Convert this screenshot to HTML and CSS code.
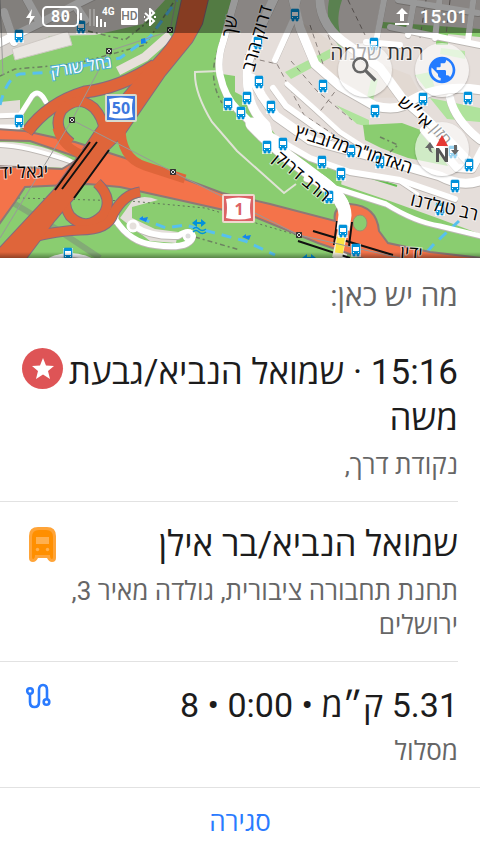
FILE: index.html
```html
<!DOCTYPE html>
<html lang="he" dir="rtl">
<head>
    <meta charset="UTF-8">
    <meta name="viewport" content="width=device-width, initial-scale=1.0">
    <title>מה יש כאן</title>
    <link rel="stylesheet" href="styles.css">
</head>
<body>
    <div class="map">
        <svg class="map-canvas" viewBox="0 0 480 258" direction="ltr">
            <defs>
                <g id="bus">
                    <path d="M-5-6h10v13h-10z" fill="#fff" opacity=".7"/>
                    <path d="M-3-6h6q1 0 1 1v9h-1v2h-2v-2h-2v2h-2v-2h-1v-9q0-1 1-1z" fill="#0092da" stroke="#0092da" stroke-width=".6"/>
                    <path d="M-3-3h6v4h-6zM-3 2h1v1h-1zM2 2h1v1h-1z" fill="#fff"/>
                </g>
                <g id="tower">
                    <path d="M-2.500-2.500h5v5h-5zM-2.500-2.500l5 5M-2.500 2.500l5-5" fill="#ddd" stroke="#333" stroke-width="1"/>
                </g>
                <g id="streets" fill="none" stroke-linecap="round" stroke-linejoin="round">
                    <path d="M-5 45L40 23L75 5L95-5M14 42L4 12M40 23L25-4M75 5L85 20" stroke-width="8"/>
                    <path d="M237-8L223 42Q217 60 220 75Q225 98 238 110L256 128" stroke-width="7"/>
                    <path d="M277-8L262 24L248 62Q246 82 249 95Q252 112 266 125L270 142" stroke-width="9"/>
                    <path d="M275 60L293 20L299-5" stroke-width="6"/>
                    <path d="M292-5L300 28L315 64L340 86L375 106Q400 112 412 100Q440 84 482 90" stroke-width="9"/>
                    <path d="M320-5Q318 25 348 45L380 68L402 98L425 118L450 142L472 165" stroke-width="9"/>
                    <path d="M252 78L262 96L276 116L310 140L370 156L440 176Q462 188 482 180" stroke-width="9"/>
                    <path d="M287 84L315 109L340 132L365 148" stroke-width="5"/>
                    <path d="M273 88L286 106L310 123L330 137" stroke-width="6"/>
                    <path d="M272 136L310 158L350 172L400 180L455 199" stroke-width="6"/>
                    <path d="M355 172L400 182L418 194" stroke-width="3"/>
                    <path d="M385-5L376 42M398 0L478 13M390 27L480 45M415-5L408 35M440-5L435 38M474-5L468 40M366 42L400 45" stroke-width="6"/>
                    <path d="M450 98Q455 120 480 140M424 130L457 168L472 169L482 150" stroke-width="8"/>
                    <path d="M252 124L262 134L287 156L318 179Q345 198 345 215L340 258" stroke-width="13"/>
                    <path d="M306 179L345 191L386 204Q415 222 440 226L485 237" stroke-width="5"/>
                    <path d="M-3 127L18 127M-3 116L20 115L32 96Q39 88 46 102" stroke-width="5"/>
                    <path d="M-5 145Q20 144 70 161" stroke-width="4"/>
                    <path d="M105 221L115 219Q130 243 155 245Q190 250 193 236Q190 228 178 236Q150 237 134 226M116 212L115 221" stroke-width="6"/>
                    <path d="M45 262Q70 248 95 262" stroke-width="4"/>
                </g>
                <g id="ramps" fill="none">
                    <path d="M155 65Q120 88 85 92Q48 103 27 132" stroke-width="11"/>
                    <path d="M71 143Q51 128 62 110Q78 94 94 108Q103 118 104 130" stroke-width="9"/>
                    <path d="M57 128Q62 148 86 156M121 125Q120 158 145 166L185 179" stroke-width="9"/>
                    <path d="M97 183Q114 199 103 215Q86 232 70 216Q62 204 68 190" stroke-width="9"/>
                    <path d="M25 240Q45 232 80 230Q108 230 113 214Q124 194 140 192" stroke-width="9"/>
                </g>
                <path id="trunk" d="M183-5L209-5L202 24L192 42L165 75L125 133L107 151L74 198L55 220L25 260L-4 262L-4 252L53 191L82 151L96 130L118 101L143 71Q168 47 175 32z"/>
                <path id="motorway" d="M-5 129L25 131L75 142L150 166L222 193L270 204L335 221Q332 206 350 204Q377 206 379 231L388 243L430 252L482 258V262L370 261L318 243L255 217L170 198L120 187L88 184L25 187L15 202L-5 230L-5 166L62 169L80 158L30 141L-5 140z"/>
            </defs>
            <rect width="480" height="258" fill="#8acd70"/>

            <!-- built-up areas -->
            <path d="M0 0H165L143 24L95 35L50 36L0 60z" fill="#d9d4cf"/>
            <path d="M12 49L68 31L72 45L15 60z" fill="#eae6e2" stroke="#cfc9c4"/>
            <path d="M0 102L20 100L20 130L0 130z" fill="#e2ddd8"/>
            <path d="M235 0H480V234L440 219L390 201L340 184L343 172L306 154L277 137L250 100L235 92V76L222 74V50z" fill="#e5deda"/>
            <path d="M290 15L345 50L410 75L422 97L370 98L320 67z" fill="#e2d9d2"/>
            <path d="M0 142Q40 141 75 161L73 168L0 166z" fill="#e6e1dd"/>
            <path d="M120 218L133 200Q144 194 158 200L132 207V218L155 229L178 232L176 243L150 241z" fill="#e3deda"/>

            <!-- parks -->
            <path d="M285 72L330 49L330 58L291 79z" fill="#afe39c"/>
            <path d="M329 0L342 0Q333 25 346 47L340 48Q324 27 329 0z" fill="#97d885"/>
            <path d="M383 22L480 29V37L381 28zM436 31h12v14h-12z" fill="#8acd70"/>
            <path d="M336 105L369 120V127L357 124zM415 75l15-3 5 16-9 1zM430 98L480 108V122L447 119z" fill="#afe39c"/>
            <path d="M363 125L402 123L426 132L448 166L408 158L381 148L365 140z" fill="#8acd70"/>
            <path d="M441 48l24 3v8l-25-5zM371 80l7-1-5 22h-7z" fill="#bbe7aa"/>
            <path d="M315 167L342 175L341 187L313 177z" fill="#8acd70"/>
            <path d="M253 84L268 112M349 171L397 186" stroke="#65be50" stroke-width="2" fill="none"/>

            <!-- footpaths -->
            <g fill="none" stroke="#6c8161" stroke-width="1.500" stroke-dasharray="5 3 2 3">
                <path d="M0 76L15 69L75 64L145 45L175 0M88 31L125 40L150 20M232 0L215 60Q210 83 222 103M380 137L398 145L390 152M195 237L240 250"/>
            </g>
            <g fill="none" stroke="#8b827e" stroke-dasharray="5 4">
                <path d="M251 58L277 64L304 115L336 136M291 61L317 91L352 120M310 25L325 70M340 85L318 114M348 0L365 35M426 0L420 38M450 0L446 35M264 35L245 55M318 10L332 45"/>
            </g>
            <path d="M18 198L130 201L205 208L300 236" fill="none" stroke="#617558" stroke-dasharray="2 3"/>
            <path d="M0 195L55 228L100 258" fill="none" stroke="#77797f" stroke-width="6" opacity=".4"/>
            <path d="M220 71L195 72Q194 92 212 122L237 151L284 193L296 184" fill="none" stroke="#e0e3d6" stroke-width="2"/>
            <path d="M170 35L145 57L118 71" fill="none" stroke="#e7e0db" stroke-width="9"/>

            <!-- streams -->
            <g fill="none" stroke="#57c0ee" stroke-width="3" stroke-dasharray="10 7">
                <path d="M0 105Q7 77 20 74L55 72L120 58L150 37L177 0M140 218L166 228L185 225L245 241L275 255M459 221L434 244L426 253"/>
            </g>

            <use href="#streets" stroke="#bcb7b3" transform="translate(0 1)"/>
            <use href="#streets" stroke="#fff"/>
            <circle cx="133" cy="226" r="5" fill="#e5e0dc" stroke="#fff" stroke-width="3"/>
            <circle cx="188" cy="236" r="4" fill="#ddd" stroke="#fff" stroke-width="3"/>

            <!-- main roads -->
            <use href="#motorway" fill="#f4734a" stroke="#8d7977" stroke-width="2"/>
            <g stroke="#846b80" stroke-width="2">
                <path d="M155 65Q120 88 85 92Q48 103 27 132" fill="none" stroke-width="13"/>
                <path d="M71 143Q51 128 62 110Q78 94 94 108Q103 118 104 130M97 183Q114 199 103 215Q86 232 70 216Q62 204 68 190M25 240Q45 232 80 230Q108 230 113 214Q124 194 140 192" fill="none" stroke-width="11"/>
                <use href="#trunk" fill="#df653a"/>
            </g>
            <use href="#ramps" stroke="#df653a"/>
            <use href="#trunk" fill="#df653a"/>
            <ellipse cx="360" cy="223" rx="7" ry="8" fill="#8acd70" stroke="#a08c70"/>
            <path d="M90 142L55 190M97 142L62 189M109 150L74 198" stroke="#111" stroke-width="2"/>
            <path d="M313 231L393 255M298 241L350 258" stroke="#111" stroke-width="2"/>
            <path d="M337 221L334 245M352 222L349 246" stroke="#111" stroke-width="2"/>
            <path d="M318 179Q345 198 345 215L343 230" fill="none" stroke="#fff" stroke-width="13"/>
            <path d="M344 225L337 258" stroke="#f4efdc" stroke-width="10"/>
            <path d="M341 237L339 253" stroke="#fae443" stroke-width="8"/>

            <!-- power lines -->
            <path d="M176 0L170 31L109 51L72 120L0 238M72 120L173 172L299 235L400 258M0 0L3 75" fill="none" stroke="#999" stroke-width="1"/>
            <use href="#tower" x="170" y="30"/>
            <use href="#tower" x="109" y="51"/>
            <use href="#tower" x="72" y="120"/>
            <use href="#tower" x="173" y="172"/>
            <use href="#tower" x="299" y="235"/>

            <g class="stops">
                <use href="#bus" x="19" y="36"/>
                <use href="#bus" x="81" y="27"/>
                <use href="#bus" x="19" y="121"/>
                <use href="#bus" x="68" y="254"/>
                <use href="#bus" x="295" y="15"/>
                <use href="#bus" x="258" y="43"/>
                <use href="#bus" x="259" y="82"/>
                <use href="#bus" x="247" y="98"/>
                <use href="#bus" x="228" y="104"/>
                <use href="#bus" x="241" y="113"/>
                <use href="#bus" x="271" y="107"/>
                <use href="#bus" x="323" y="86"/>
                <use href="#bus" x="374" y="44"/>
                <use href="#bus" x="375" y="111"/>
                <use href="#bus" x="423" y="99"/>
                <use href="#bus" x="468" y="98"/>
                <use href="#bus" x="267" y="147"/>
                <use href="#bus" x="283" y="144"/>
                <use href="#bus" x="322" y="162"/>
                <use href="#bus" x="341" y="174"/>
                <use href="#bus" x="329" y="197"/>
                <use href="#bus" x="351" y="151"/>
                <use href="#bus" x="380" y="162"/>
                <use href="#bus" x="455" y="186"/>
                <use href="#bus" x="469" y="165"/>
                <use href="#bus" x="453" y="152"/>
                <use href="#bus" x="440" y="209"/>
                <use href="#bus" x="343" y="231"/>
                <use href="#bus" x="356" y="250"/>
            </g>
            <path d="M141 39l4-1 1 5-5 1zM139 219l4-3v2l5-1-2 5zM242 237l4-3v2l5-1-2 5z" fill="#1485ef"/>
            <path d="M192 223l5-4v3h4v-3l5 4-5 4v-3h-4v3z" fill="#0092da"/>
            <path d="M193 229q3-3 6 0t7 0M193 232q3-3 6 0t7 0" fill="none" stroke="#0092da" stroke-width="1.500"/>
            <path d="M302 258l5-4v3h4v-3l5 4z" fill="#0092da"/>

            <!-- labels -->
            <g class="labels">
                <text class="water" transform="translate(82 72) rotate(-9)">נחל שורק</text>
                <text transform="translate(377 60)" class="district">רמת שלמה</text>
                <text transform="translate(263 40) rotate(-74)">דרוק הרב</text>
                <text transform="translate(236 27) rotate(-80)">שך</text>
                <text transform="translate(411 117) rotate(42)">אי״ש</text>
                <text transform="translate(437 138) rotate(50)" class="small">חזון</text>
                <text transform="translate(352 155) rotate(18)">האדמו"ר מלובביץ</text>
                <text transform="translate(298 181) rotate(40)">הרב דרוק</text>
                <text transform="translate(443 213) rotate(13)">רב טולדנו</text>
                <text transform="translate(24 178) rotate(-2)">יגאל יד</text>
                <text transform="translate(411 259) rotate(4)">ידין</text>
            </g>

            <!-- road shields -->
            <rect x="105" y="94" width="32" height="28" rx="2" fill="#d8dbce"/>
            <rect x="107" y="96" width="28" height="24" fill="#3d78de"/>
            <path d="M109 99Q121 96 133 99Q131 108 133 117Q121 120 109 117Q111 108 109 99z" fill="#fff"/>
            <text class="shield shield-blue" x="121" y="114">50</text>
            <rect x="222" y="194" width="33" height="29" rx="2" fill="#eed9ce"/>
            <rect x="224" y="196" width="29" height="25" fill="#dc6265"/>
            <path d="M226 199Q239 196 251 199Q249 208 251 218Q239 221 226 218Q228 208 226 199z" fill="#fff"/>
            <text class="shield shield-red" x="239" y="215">1</text>
        </svg>

        <button class="map-button search" aria-label="חיפוש">
            <svg viewBox="0 0 24 24"><circle cx="8" cy="8" r="6" fill="none" stroke="currentColor" stroke-width="2.200"/><path d="M12.500 12.500L21 21" stroke="currentColor" stroke-width="2.800"/></svg>
        </button>
        <button class="map-button layers" aria-label="שכבות מפה">
            <svg viewBox="0 0 24 24"><path fill="currentColor" d="M12 2C6.480 2 2 6.480 2 12s4.480 10 10 10 10-4.480 10-10S17.520 2 12 2zm-1 17.930c-3.950-.490-7-3.850-7-7.930 0-.620.080-1.210.210-1.790L9 15v1c0 1.100.900 2 2 2v1.930zm6.900-2.540c-.260-.810-1-1.390-1.900-1.390h-1v-3c0-.550-.450-1-1-1H8v-2h2c.550 0 1-.450 1-1V7h2c1.100 0 2-.900 2-2v-.410c2.930 1.190 5 4.060 5 7.410 0 2.080-.800 3.970-2.100 5.390z"/></svg>
        </button>
        <button class="map-button compass" aria-label="מצפן">
            <svg viewBox="0 0 36 36"><path d="M18 4l6 11H12z" fill="#e53935"/><path d="M12 31V17h3l6 9v-9h3v14h-3l-6-9v9z" fill="#555"/><path d="M1 17l5-6 4 6H7q0 3 2 5-4-1-5-5zM27 19l4 5 4-5h-2v-5h-3v5z" fill="#666"/></svg>
        </button>

        <div class="status-bar">
            <div class="status-time">
                <time>15:01</time>
                <svg width="16" height="20" viewBox="0 0 16 20"><path d="M8 1l6 6h-4v7H6V7H2zM1 16h14v2H1z" fill="#fff"/></svg>
            </div>
            <div class="status-icons" dir="ltr">
                <svg width="10" height="16" viewBox="0 0 10 16"><path d="M6 0L0 9h4l-1 7 6-9H5z" fill="#fff"/></svg>
                <span class="battery">80</span>
                <svg width="30" height="22" viewBox="0 0 30 22"><path d="M4 3h2v17H4zM8 3h2v17H8z" fill="#fff" opacity=".25"/><path d="M11 10h2v11h-2zM15 13h2v8h-2zM19 16h2v5h-2z" fill="#fff"/><text x="17" y="9" class="network">4G</text></svg>
                <span class="hd">HD</span>
                <svg width="12" height="18" viewBox="0 0 12 18"><path d="M1 5l9 8-4 4V1l4 4-9 8M0 9h1M10 9h2" fill="none" stroke="#fff" stroke-width="2"/></svg>
            </div>
        </div>
    </div>

    <main class="sheet">
        <h1>מה יש כאן:</h1>
        <ul class="places">
            <li class="place">
                <div class="place-text">
                    <h2>15:16 · שמואל הנביא/גבעת משה</h2>
                    <p>נקודת דרך,</p>
                </div>
                <svg class="place-icon" viewBox="0 0 42 42"><circle cx="20.500" cy="20.500" r="20.500" fill="#de5456"/><path d="M21 10l3 7.500 8 .500-6 5 2 8-7-4.500-7 4.500 2-8-6-5 8-.500z" fill="#fff"/></svg>
            </li>
            <li class="place">
                <div class="place-text">
                    <h2>שמואל הנביא/בר אילן</h2>
                    <p>תחנת תחבורה ציבורית, גולדה מאיר 3, ירושלים</p>
                </div>
                <svg class="place-icon" viewBox="0 -3 42 42"><path d="M7 13Q7 4 16 4h9q9 0 9 9v22q0 4-4 4-3 0-5-4h-9q-2 4-5 4-4 0-4-4z" fill="#ffa438"/><path d="M10 14q0-7 7-7h7q7 0 7 7v20q0 2-1 2-2 0-2-4H13q0 4-2 4-1 0-1-2z" fill="#ff8f00"/><path d="M14 14h13v7H14z" fill="#ffb04f"/><circle cx="15.500" cy="26.500" r="1.700" fill="#ffb04f"/><circle cx="25.500" cy="26.500" r="1.700" fill="#ffb04f"/></svg>
            </li>
            <li class="place">
                <div class="place-text">
                    <h2 class="numbers">5.31 ק״מ • 0:00 • 8</h2>
                    <p>מסלול</p>
                </div>
                <svg class="place-icon" viewBox="0 0 42 42"><g fill="none" stroke="#2a7bff" stroke-width="2.600"><circle cx="8" cy="11" r="2.800"/><circle cx="24.500" cy="22" r="2.800"/><path d="M8 14v8q0 5 4.500 5t4.500-5V10q0-5 4-5t4 5v9"/></g></svg>
            </li>
        </ul>
        <button class="close">סגירה</button>
    </main>
</body>
</html>
```

FILE: styles.css
```css
* {
    box-sizing: border-box;
}
body {
    margin: 0;
    min-height: 100vh;
    display: flex;
    flex-direction: column;
    background: #fff;
    color: #1c1c1c;
    font-family: Roboto, "Open Sans", sans-serif;
}
button {
    border: 0;
    padding: 0;
    font: inherit;
    cursor: pointer;
}

/* map */
.map {
    position: relative;
    overflow: hidden;
}
.map::after {
    content: "";
    position: absolute;
    left: 0;
    right: 0;
    bottom: 0;
    height: 6px;
    background: linear-gradient(transparent, rgba(0, 0, 0, 0.35));
}
.map-canvas {
    display: block;
    width: 100%;
}
.labels text {
    font-size: 18px;
    font-weight: 500;
    text-anchor: middle;
    fill: #000;
    stroke: rgba(255, 255, 255, 0.6);
    stroke-width: 2px;
    paint-order: stroke;
}
.labels .water {
    font-size: 16px;
    fill: #fff;
    stroke: #4cb2d4;
}
.labels .district {
    font-size: 21px;
    font-weight: 400;
    fill: #333;
}
.labels .small {
    font-size: 16px;
}
.shield {
    font-family: "Noto Sans", sans-serif;
    font-size: 16px;
    font-weight: 700;
    text-anchor: middle;
}
.shield-blue {
    fill: #3d78de;
}
.shield-red {
    fill: #dc6265;
}
.map-button {
    position: absolute;
    display: flex;
    align-items: center;
    justify-content: center;
    width: 54px;
    height: 54px;
    border-radius: 50%;
    background: rgba(255, 255, 255, 0.6);
    box-shadow: 0 1px 2px rgba(0, 0, 0, 0.25);
    color: #666;
}
.map-button svg {
    width: 32px;
    height: 32px;
}
.search {
    top: 43px;
    right: 88px;
}
.search svg {
    width: 28px;
    height: 28px;
}
.layers {
    top: 43px;
    right: 11px;
    color: #237bff;
}
.compass {
    top: 122px;
    right: 11px;
}
.compass svg {
    width: 36px;
    height: 36px;
}

/* status bar */
.status-bar {
    position: absolute;
    top: 0;
    left: 0;
    right: 0;
    display: flex;
    align-items: center;
    justify-content: space-between;
    height: 33px;
    padding: 0 12px 0 26px;
    background: rgba(0, 0, 0, 0.4);
    color: #fff;
}
.status-time,
.status-icons {
    display: flex;
    align-items: center;
}
.status-time {
    gap: 10px;
    font-size: 19px;
    font-weight: 500;
}
.status-icons {
    gap: 6px;
}
.battery {
    position: relative;
    width: 37px;
    border: 2px solid #fff;
    border-radius: 5px;
    font: 700 16px/17px "DejaVu Sans Mono", monospace;
    text-align: center;
}
.battery::after {
    content: "";
    position: absolute;
    top: 5px;
    right: -5px;
    width: 2px;
    height: 7px;
    background: #fff;
}
.network {
    font-size: 10px;
    font-weight: 700;
    fill: #fff;
    text-anchor: start;
}
.hd {
    width: 17px;
    border-radius: 1px;
    background: #fff;
    color: #777;
    font: 500 12px/17px Roboto, sans-serif;
    text-align: center;
}

/* sheet */
.sheet {
    flex: 1;
    display: flex;
    flex-direction: column;
}
h1,
h2,
p {
    margin: 0;
    font-weight: 400;
}
h1 {
    padding: 18px 22px 14px;
    color: #666;
    font-size: 30px;
    line-height: 40px;
}
.places {
    margin: 0;
    padding: 0;
    list-style: none;
}
.place {
    display: flex;
    margin-right: 22px;
    padding: 18px 0 19px 22px;
    border-bottom: 1px solid #e2e2e2;
}
.place:last-child {
    margin-right: 0;
    padding-right: 22px;
}
.place-text {
    flex: 1;
    padding-top: 2px;
}
.place h2 {
    font-size: 35px;
    line-height: 46px;
}
.place .numbers {
    font-size: 34px;
}
.place p {
    margin-top: 6px;
    color: #666;
    font-size: 26px;
    line-height: 34px;
}
.place-icon {
    flex: none;
    width: 42px;
    height: 42px;
}
.close {
    flex: 1;
    min-height: 66px;
    background: #fff;
    color: #2a7bff;
    font-size: 26px;
}
```
